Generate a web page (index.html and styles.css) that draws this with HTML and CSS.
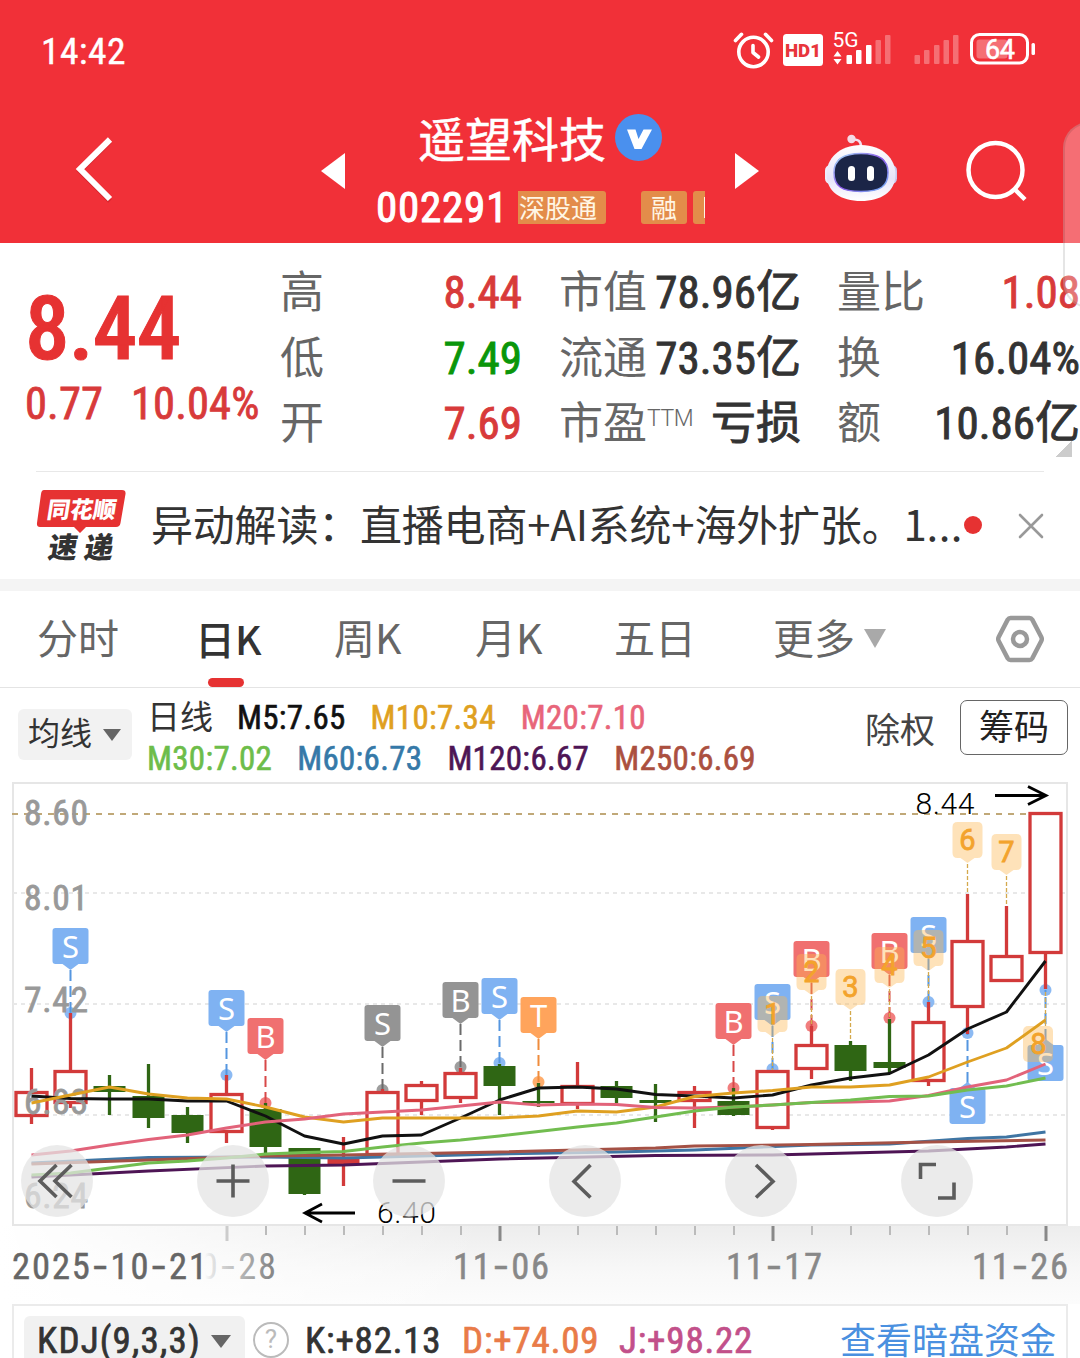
FILE: index.html
```html
<!DOCTYPE html>
<html lang="zh-CN">
<head>
<meta charset="utf-8">
<title>遥望科技 002291</title>
<link rel="stylesheet" href="styles.css">
</head>
<body>
<header class="top">
  <div class="status">
    <span class="clock">14:42</span>
    <svg class="status-icons" width="306" height="44" viewBox="732 28 306 44">
      <g fill="none" stroke="#fff" stroke-width="3.6" stroke-linecap="round" stroke-linejoin="round">
        <circle cx="753.5" cy="52" r="14.7"/>
        <path d="M735.5 40.5l6-6.2M771.5 40.5l-6-6.2M753 45.500v7l5.500 4.500"/>
      </g>
      <rect x="783" y="34" width="40" height="32" rx="3.500" fill="#fff"/>
      <text class="hd" x="785" y="57" textLength="36" lengthAdjust="spacingAndGlyphs">HD1</text>
      <text class="net" x="832.500" y="47" textLength="26">5G</text>
      <g fill="#fff">
        <path d="M833.500 56.500l4-5.500 4 5.500zM833.500 59l4 5.500 4-5.500z"/>
        <rect x="846.500" y="55" width="5.500" height="9" rx="1"/>
        <rect x="856" y="50" width="5.500" height="14" rx="1"/>
        <rect x="866" y="45" width="5.500" height="19" rx="1"/>
      </g>
      <g fill="#fff" opacity=".3">
        <rect x="875.500" y="40" width="5.500" height="24" rx="1"/>
        <rect x="885" y="35" width="5.500" height="29" rx="1"/>
        <rect x="914.500" y="55" width="5.500" height="9" rx="1"/>
        <rect x="924" y="50" width="5.500" height="14" rx="1"/>
        <rect x="934" y="45" width="5.500" height="19" rx="1"/>
        <rect x="943.500" y="40" width="5.500" height="24" rx="1"/>
        <rect x="953" y="35" width="5.500" height="29" rx="1"/>
        <rect x="976.500" y="39.500" width="31" height="19" rx="3"/>
      </g>
      <rect x="971.500" y="34.500" width="56" height="28.500" rx="8" fill="none" stroke="#fff" stroke-width="3"/>
      <rect x="1031.500" y="43" width="3.500" height="12" rx="1.500" fill="#fff"/>
      <text class="pct" x="985" y="58.500" textLength="30">64</text>
    </svg>
  </div>
  <div class="nav">
    <svg class="back" width="40" height="68" viewBox="0 0 40 68"><path d="M35 4.500L5 34l30 30" fill="none" stroke="#a8141c" stroke-opacity=".35" stroke-width="5" transform="translate(0 2)"/><path d="M35 4.500L5 34l30 30" fill="none" stroke="#fff" stroke-width="6"/></svg>
    <svg class="prev" width="24" height="36" viewBox="0 0 24 36"><path d="M0 18L24 0v36z" fill="#fff"/></svg>
    <div class="stock">
      <div class="stock-name">遥望科技
        <svg width="47" height="47" viewBox="0 0 47 47"><circle cx="23.500" cy="23.500" r="23.500" fill="#4a90ee"/><path d="M12 15.500h8.500l3 9.500 5-9.500h8.500L26.500 35h-7z" fill="#fff"/></svg>
      </div>
      <div class="stock-sub"><span class="code">002291</span><span class="tag tag-cut">深股通</span><span class="tag tag-rong">融</span><span class="tag tag-part"></span></div>
    </div>
    <svg class="next" width="24" height="36" viewBox="0 0 24 36"><path d="M24 18L0 0v36z" fill="#fff"/></svg>
    <svg class="robot" width="74" height="70" viewBox="824 133 74 70">
      <defs>
        <linearGradient id="shell" x1="0" y1="0" x2="0" y2="1"><stop offset="0" stop-color="#fff"/><stop offset=".6" stop-color="#e6e3f8"/><stop offset="1" stop-color="#fff"/></linearGradient>
        <linearGradient id="rim" x1="0" y1="0" x2="1" y2="1"><stop offset="0" stop-color="#a5e4f8"/><stop offset=".5" stop-color="#8a55e8"/><stop offset="1" stop-color="#74b8f5"/></linearGradient>
      </defs>
      <path d="M852 139.500q9-1 9 7" fill="none" stroke="#f3dff0" stroke-width="2.500"/>
      <circle cx="851.500" cy="139" r="4.200" fill="#f4dbe6"/>
      <rect x="825" y="165" width="12" height="19" rx="5.500" fill="#efedfb"/>
      <rect x="885" y="165" width="12" height="19" rx="5.500" fill="#c9c9ee"/>
      <path d="M861 145c22 0 34.500 14 34.500 29 0 18-14.500 27-34.500 27s-34.500-9-34.500-27c0-15 12.500-29 34.500-29z" fill="url(#shell)"/>
      <path d="M861 153.500c18 0 27 6 27 19 0 14-8 19-27 19s-27-5-27-19c0-13 9-19 27-19z" fill="#1b2547" stroke="url(#rim)" stroke-width="1.500"/>
      <rect x="848" y="166" width="7" height="15" rx="3.500" fill="#fff"/>
      <rect x="867" y="166" width="7" height="15" rx="3.500" fill="#fff"/>
    </svg>
    <svg class="search" width="62" height="62" viewBox="0 0 62 62"><g fill="none" stroke="#fff" stroke-width="4.500"><circle cx="29.500" cy="30" r="27"/><path d="M48.500 49l10.500 10.500"/></g></svg>
  </div>
</header>
<div class="side-handle"></div>

<section class="quote">
  <div class="price">
    <div class="last">8.44</div>
    <div class="change"><span>0.77</span><span>10.04%</span></div>
  </div>
  <dl class="stats s1">
    <dt>高</dt><dd class="up">8.44</dd>
    <dt>低</dt><dd class="down">7.49</dd>
    <dt>开</dt><dd class="up">7.69</dd>
  </dl>
  <dl class="stats s2">
    <dt>市值</dt><dd>78.96亿</dd>
    <dt>流通</dt><dd>73.35亿</dd>
    <dt>市盈<sup>TTM</sup></dt><dd>亏损</dd>
  </dl>
  <dl class="stats s3">
    <dt>量比</dt><dd class="up">1.08</dd>
    <dt>换</dt><dd>16.04%</dd>
    <dt>额</dt><dd>10.86亿</dd>
  </dl>
  <i class="corner"></i>
</section>

<section class="news">
  <svg class="logo" width="90" height="74" viewBox="36 488 90 74">
    <path d="M44 489h78q4 0 3.500 4l-5 29q-.6 4-4.500 4H86l-6 6-6-6H40q-3.500 0-3-4l4-29q.5-4 3-4z" fill="#e63232"/>
    <text class="logo-a" transform="translate(46 517) skewX(-9)" textLength="69">同花顺</text>
    <text class="logo-b" transform="translate(47 557) skewX(-9)" textLength="65">速递</text>
  </svg>
  <p>异动解读：直播电商+AI系统+海外扩张。1<span>...</span></p>
  <i class="dot"></i>
  <svg class="close" width="26" height="26" viewBox="0 0 26 26"><path d="M2 2l22 22M24 2L2 24" stroke="#999" stroke-width="2.600" stroke-linecap="round"/></svg>
</section>

<nav class="tabs">
  <span>分时</span>
  <span class="active">日K</span>
  <span>周K</span>
  <span>月K</span>
  <span>五日</span>
  <span>更多<svg width="22" height="19" viewBox="0 0 22 19"><path d="M0 0h22L11 19z" fill="#a9a9a9"/></svg></span>
  <svg class="gear" width="50" height="48" viewBox="0 0 50 48"><g fill="none" stroke="#999"><path d="M15.500 3h19q1.800 0 2.800 1.600l9 17.400q1 2 0 4l-9 17.400q-1 1.600-2.800 1.600h-19q-1.800 0-2.800-1.600L3.700 26q-1-2 0-4l9-17.400Q13.700 3 15.500 3z" stroke-width="4.500"/><circle cx="25" cy="24" r="7" stroke-width="4.500"/></g></svg>
</nav>

<section class="legend">
  <span class="pick">均线<svg width="18" height="12" viewBox="0 0 18 12"><path d="M0 0h18L9 12z" fill="#666"/></svg></span>
  <div class="ma">
    <div><b class="ri">日线</b><b class="m5">M5:7.65</b><b class="m10">M10:7.34</b><b class="m20">M20:7.10</b></div>
    <div><b class="m30">M30:7.02</b><b class="m60">M60:6.73</b><b class="m120">M120:6.67</b><b class="m250">M250:6.69</b></div>
  </div>
  <span class="chuquan">除权</span>
  <span class="chips">筹码</span>
</section>

<section class="chart">
  <svg id="kline" width="1080" height="444" viewBox="0 782 1080 444">
    <rect x="13" y="783" width="1054" height="442" fill="#fff" stroke="#e6e6e6" stroke-width="2"/>
    <g class="grid">
      <path class="limit" d="M12 814H1030"/>
      <path d="M13 893H1066M13 1004H1066M13 1115H1066"/>
    </g>
    <g id="marks"></g>
    <g id="candles"></g>
    <g id="counts"></g>
    <g class="ylabels">
      <text x="24" y="825" textLength="64">8.60</text>
      <text x="24" y="910" textLength="64">8.01</text>
      <text x="24" y="1012" textLength="64">7.42</text>
      <text x="24" y="1114" textLength="64">6.83</text>
      <text x="24" y="1208" textLength="64">6.24</text>
    </g>
    <g id="lines"></g>
    <g class="extreme">
      <text x="915.500" y="814" textLength="59">8.44</text>
      <path d="M995 795.500h50M1028 786.500l18 9-18 9"/>
      <text x="377" y="1223" textLength="59">6.40</text>
      <path d="M355 1213h-50M322 1204l-17 9 17 9"/>
    </g>
  </svg>
  <div class="tools">
    <button><svg viewBox="0 0 72 72"><path d="M35.500 20L19 36l16.500 16M50.500 20L34 36l16.500 16"/></svg></button>
    <button><svg viewBox="0 0 72 72"><path d="M36 19.500v33M19.500 36h33"/></svg></button>
    <button><svg viewBox="0 0 72 72"><path d="M19.500 36h33"/></svg></button>
    <button><svg viewBox="0 0 72 72"><path d="M41.500 20L25 36.500 41.500 52.500"/></svg></button>
    <button><svg viewBox="0 0 72 72"><path d="M31 20l17 16.500L31 52.500"/></svg></button>
    <button><svg viewBox="0 0 72 72"><path d="M19.500 34V19.500H35M37 53h16V37.500"/></svg></button>
  </div>
</section>

<section class="axis">
  <svg id="axis" width="1080" height="78" viewBox="0 1226 1080 78">
    <defs>
      <linearGradient id="fade" gradientUnits="userSpaceOnUse" x1="205" y1="0" x2="270" y2="0"><stop offset="0" stop-color="#888" stop-opacity="0"/><stop offset=".1" stop-color="#888" stop-opacity=".2"/><stop offset="1" stop-color="#888"/></linearGradient>
    </defs>
    <g id="ticks"></g>
    <text class="old" x="180" y="1279" textLength="96">10<tspan>-</tspan>28</text>
    <text x="453" y="1279" textLength="96">11<tspan>-</tspan>06</text>
    <text x="726" y="1279" textLength="96">11<tspan>-</tspan>17</text>
    <text x="972" y="1279" textLength="96">11<tspan>-</tspan>26</text>
    <text class="first" x="12" y="1279" textLength="195">2025<tspan>-</tspan>10<tspan>-</tspan>21</text>
  </svg>
</section>

<section class="kdj">
  <span class="kdj-name">KDJ(9,3,3)<svg width="20" height="13" viewBox="0 0 20 13"><path d="M0 0h20L10 13z" fill="#666"/></svg></span>
  <span class="help">?</span>
  <b class="k">K:+82.13</b><b class="d">D:+74.09</b><b class="j">J:+98.22</b>
  <a>查看暗盘资金</a>
</section>

<script>
// x of the nth day, 39px per candle
function px(i) { return 31.5 + i * 39; }

// up/down, body top, body bottom, high, low
var candles = [
  ['u',1091,1117,1068,1124],['u',1070,1104,1013,1108],['d',1086,1092,1075,1115],
  ['d',1096,1118,1064,1128],['d',1115,1133,1107,1143],['u',1093,1133,1075,1143],
  ['d',1109,1147,1103,1153],['d',1148,1194,1148,1195],['u',1159,1164,1137,1186],
  ['u',1091,1156,1089,1156],['u',1084,1102,1081,1115],['u',1072,1099,1068,1103],
  ['d',1066,1086,1064,1115],['d',1101,1103,1083,1107],['u',1085,1105,1062,1109],
  ['d',1086,1098,1081,1103],['d',1100,1103,1084,1122],['u',1091,1102,1086,1128],
  ['d',1101,1115,1088,1116],['u',1070,1129,1070,1130],['u',1044,1070,1026,1079],
  ['d',1045,1071,1041,1081],['d',1062,1068,1019,1073],['u',1021,1082,1002,1086],
  ['u',940,1008,894,1034],['u',955,982,906,982],['u',812,954,812,989]
];

// day, letter, colour, top of the box, dot
var marks = [
  [1,'S','blue',928,1013],[5,'S','blue',990,1075],[6,'B','red',1018,1103],
  [9,'S','grey',1005,1090],[11,'B','grey',982,1067],[12,'S','blue',978,1063],
  [13,'T','orange',997,1082],[18,'B','red',1003,1088],[19,'S','blue',984,1069],
  [20,'B','red',941,1026],[22,'B','red',933,1018],[23,'S','blue',917,1002],
  [24,'S','blue',1088,1033],[26,'S','blue',1045,990]
];

// day, top of the box, end of the stem
var counts = [[19,996,1070],[20,954,1026],[21,969,1041],[22,947,1019],[23,930,1002],[24,822,894],[25,834,906]];

var lines = {
  m60: [[0,1163],[3,1157.5],[6,1157],[8,1158],[12,1154],[15,1152],[17,1150],[20,1145],[22,1144],[24,1138.5],[25,1137],[26,1132]],
  m120: [[0,1177],[3,1171],[6,1166],[8,1165],[12,1159],[16,1155.5],[19,1155],[21,1153],[23,1151],[25,1147],[26,1144]],
  m250: [[0,1164],[3,1160],[6,1156],[8,1155],[12,1152],[16,1148],[17,1146],[20,1144.5],[23,1142],[26,1140]],
  m5: [1096,1098.5,1099,1099,1101,1101,1116,1136,1144,1136,1135,1118,1100,1088,1087,1089,1094.5,1096,1098,1095,1085,1078,1073.5,1055,1029,1012,961],
  m10: [1103,1095,1087,1094,1098,1099,1107,1117,1122,1118,1118,1118,1118,1116,1111,1112,1107,1096.5,1093,1090.5,1087,1087,1085,1077,1062,1048,1020],
  m20: [1155,1151,1145,1139.5,1135,1128,1122,1119,1114,1112,1110,1106,1102,1105,1104,1104.5,1107.5,1108,1107,1105,1102.5,1102,1101,1095.5,1087,1080,1064],
  m30: [1175,1173,1168,1163,1161,1158,1154,1152.5,1151.5,1147,1143,1140,1136,1131.5,1127,1123,1117,1111,1107,1105,1102.5,1100,1096.5,1096,1090,1086,1078]
};

var html = '';
candles.forEach(function (c, i) {
  var x = px(i);
  html += '<path class="wick ' + c[0] + '" d="M' + x + ' ' + c[3] + 'V' + c[4] + '"/>';
  if (c[0] == 'u' && c[2] - c[1] > 6) {
    html += '<rect class="body u" x="' + (x - 15.5) + '" y="' + (c[1] + 1.5) + '" width="31" height="' + (c[2] - c[1] - 3) + '"/>';
  } else {
    html += '<rect class="solid ' + c[0] + '" x="' + (x - 16) + '" y="' + c[1] + '" width="32" height="' + (c[2] - c[1]) + '"/>';
  }
});
document.getElementById('candles').innerHTML = html;

html = '';
marks.forEach(function (m) {
  var x = px(m[0]), y = m[3], below = m[4] < y;
  html += '<g class="mark ' + m[2] + '"><circle cx="' + x + '" cy="' + m[4] + '" r="6"/>';
  html += '<path class="stem" d="M' + x + ' ' + (below ? y - 5 : y + 42) + 'V' + m[4] + '"/>';
  html += '<rect x="' + (x - 18) + '" y="' + y + '" width="36" height="36" rx="3"/>';
  html += below ? '<path d="M' + (x - 8) + ' ' + y + 'l8-6 8 6z"/>' : '<path d="M' + (x - 8) + ' ' + (y + 36) + 'l8 6 8-6z"/>';
  html += '<text x="' + x + '" y="' + (y + 30) + '">' + m[1] + '</text></g>';
});
document.getElementById('marks').innerHTML = html;

html = '';
counts.forEach(function (c, n) {
  var x = px(c[0]), y = c[1];
  html += '<path class="count-stem" d="M' + x + ' ' + (y + 42) + 'V' + c[2] + '"/>';
  html += '<path class="count" d="M' + (x - 10) + ' ' + y + 'h20q5 0 5 5v26q0 5-5 5h-3l-7 5-7-5h-3q-5 0-5-5v-26q0-5 5-5z"/>';
  html += '<text x="' + x + '" y="' + (y + 28) + '">' + (n + 1) + '</text>';
});
html += '<path class="count-stem" d="M1045.5 992V1026"/><rect class="count" x="1023" y="1026" width="30" height="36" rx="5"/><text x="1038.5" y="1054">8</text>';
document.getElementById('counts').innerHTML = html;

html = '';
Object.keys(lines).forEach(function (k) {
  var pts = lines[k].map(function (p, i) {
    return p.length ? px(p[0]) + ',' + p[1] : px(i) + ',' + p;
  });
  html += '<polyline class="' + k + '" points="' + pts.join(' ') + '"/>';
});
document.getElementById('lines').innerHTML = html;

html = '';
for (var i = 5; i < 27; i++) {
  var big = (i - 5) % 7 == 0;
  html += '<path class="' + (i == 5 ? 'big old' : big ? 'big' : '') + '" d="M' + (px(i) + .5) + ' 1226v' + (big ? 15 : 9) + '"/>';
}
document.getElementById('ticks').innerHTML = html;
</script>
</body>
</html>
```
FILE: styles.css
```css
* { box-sizing: border-box; }
body { margin: 0; width: 1080px; height: 1358px; overflow: hidden; position: relative; background: #fff; color: #333; font-family: "Roboto Condensed", "Noto Sans CJK SC", sans-serif; }
svg { display: block; overflow: visible; }
b, i { font-style: normal; font-weight: 400; }

.top { height: 243px; background: #f13038; color: #fff; }
.status { display: flex; justify-content: space-between; align-items: center; height: 100px; padding: 0 42px 0 41px; }
.clock { padding-top: 1px; font-size: 37.500px; letter-spacing: .4px; -webkit-text-stroke: .4px; }
.hd { font: 900 19px Roboto, sans-serif; fill: #e8353c; }
.net { font: 400 21px Roboto, sans-serif; fill: #fff; }
.pct { font: 400 27px Roboto, sans-serif; fill: #fff; stroke: #fff; stroke-width: .6; }
.nav { display: grid; grid-template-columns: 75px 246px 55px 359px 89px 142px 1fr; height: 143px; }
.nav > svg { margin-top: 53px; }
.nav .back { margin-top: 35px; grid-column: 2; }
.nav .robot { margin-top: 33px; }
.nav .search { margin-top: 40px; }
.nav .prev { grid-column: 2; grid-row: 1; justify-self: end; }
.nav .back { grid-row: 1; }
.nav .prev { margin-right: -24px; }
.stock { grid-column: 4; }
.stock-name { display: flex; align-items: center; gap: 9px; height: 74px; padding-left: 42px; font: 400 47px/78px "Noto Sans CJK SC", sans-serif; -webkit-text-stroke: .5px; }
.stock-sub { display: flex; align-items: center; height: 68px; padding-bottom: 2px; }
.code { width: 142px; font-size: 43px; letter-spacing: .8px; -webkit-text-stroke: 1px; }
.tag { height: 33px; border-radius: 3px; background: #e38c4a; font-size: 26px; line-height: 36px; text-align: center; color: #fff6e4; }
.tag-cut { width: 88px; padding-right: 9px; border-radius: 0 3px 3px 0; display: flex; justify-content: flex-end; }
.tag-rong { width: 46px; margin: 0 6px 0 35px; }
.tag-part { width: 12px; padding: 6px 0; border-radius: 3px 0 0 3px; }
.tag-part:after { content: ""; display: block; width: 1px; height: 21px; margin-left: 11px; background: #fff6e4; }
.side-handle { position: absolute; left: 1063px; top: 122px; width: 60px; height: 186px; border: 2px solid rgba(0,0,0,.1); border-radius: 26px; background: rgba(255,255,255,.3); z-index: 2; }

.quote { display: grid; grid-template-columns: 255px 243px 278px 1fr; height: 228px; padding: 17px 0 0 25px; position: relative; }
.last { height: 107px; color: #e63232; font-size: 89px; font-weight: 500; line-height: 138px; letter-spacing: -.700px; -webkit-text-stroke: 1px; }
.change { display: flex; gap: 28px; color: #d83a3a; font-size: 44.5px; line-height: 74px; letter-spacing: .1px; -webkit-text-stroke: .8px; }
.stats { display: grid; grid-template-columns: auto 1fr; grid-auto-rows: 65.500px; margin: 0; line-height: 66px; white-space: nowrap; }
.stats dt { font-size: 44px; color: #666; }
.stats dd { margin: 0; font-size: 45px; text-align: right; color: #333; -webkit-text-stroke: .9px; }
.s1 { padding-right: 1px; }
.s2 { grid-template-columns: 88px 1fr; padding-left: 36px; }
.s3 { padding-left: 36px; }
.stats .up { color: #d83a3a; }
.stats .down { color: #0a960a; }
.stats sup { font: 300 23px/1 Roboto, sans-serif; letter-spacing: -.5px; vertical-align: 13px; }
.corner { position: absolute; left: 1055px; top: 197px; width: 17px; height: 17px; background: linear-gradient(135deg, transparent 50%, #ccc 50%); }

.news { display: flex; align-items: center; height: 108px; margin: 0 36px; border-top: 1px solid #e8e8e8; }
.news p { width: 815px; margin: -6px 0 0 25px; font: 400 42px/60px "Noto Sans CJK SC", sans-serif; letter-spacing: -.2px; white-space: nowrap; }
.news p span { letter-spacing: .4px; }
.dot { width: 18px; height: 18px; margin-top: -1px; border-radius: 50%; background: #e63232; }
.close { margin-left: 36px; }
.logo-a { font: 900 23px "Noto Sans CJK SC", sans-serif; fill: #fff; }
.logo-b { font: 900 29px "Noto Sans CJK SC", sans-serif; fill: #333; }

.tabs { display: grid; grid-template-columns: 160px 137px 141px 139px 159px 222px 1fr; height: 109px; padding-left: 37px; border-top: 12px solid #f4f4f4; border-bottom: 1px solid #e4e4e4; font: 400 41px/90px "Noto Sans CJK SC", sans-serif; color: #666; }
.tabs span { display: flex; }
.tabs span svg { margin: 38px 0 0 9px; }
.tabs .active { position: relative; font-weight: 500; font-size: 40px; line-height: 94px; color: #333; margin-left: -2px; }
.active:after { content: ""; position: absolute; left: 13px; bottom: 0; width: 36px; height: 9px; border-radius: 5px; background: #e63232; }
.gear { margin-top: 24px; }

.legend { display: flex; height: 94px; padding: 0 12px 0 18px; }
.pick { display: flex; align-items: center; gap: 12px; width: 114px; height: 51px; margin-top: 21px; padding-left: 10px; border-radius: 6px; background: #f2f2f2; font-size: 32px; line-height: 51px; }
.pick svg { margin-left: -1px; }
.ma { width: 718px; padding: 9px 0 0 15px; font-size: 33px; line-height: 41px; white-space: nowrap; }
.ma div { display: flex; gap: 25px; letter-spacing: .3px; }
.ma b { -webkit-text-stroke: .6px; }
.ma .ri { width: 65px; letter-spacing: 0; -webkit-text-stroke: 0; }
.m5 { color: #111; } .m10 { color: #dfa021; } .m20 { color: #e8657a; } .m30 { color: #6dbd4a; }
.m60 { color: #3579a8; } .m120 { color: #4e1555; } .m250 { color: #ab5040; }
.chuquan { width: 95px; margin-left: 15px; font-size: 35px; line-height: 88px; color: #444; }
.chips { width: 108px; height: 55px; margin-top: 12px; flex: none; border: 1.500px solid #666; border-radius: 7px; font-size: 35px; line-height: 55px; text-align: center; color: #222; }

.chart { position: relative; height: 444px; }
.grid path { stroke: #e8e8e8; stroke-width: 1.800; stroke-dasharray: 4 4; }
.grid .limit { stroke: #c0a878; stroke-width: 2; stroke-dasharray: 6 6; }
.wick { stroke-width: 3.300; }
.wick.u, .body { stroke: #d23a3a; }
.wick.d { stroke: #2f6614; }
.body { fill: #fff; stroke-width: 3.300; }
.solid.u { fill: #d23a3a; }
.solid.d { fill: #2f6614; }
.ylabels { font-size: 35.500px; fill: #999; stroke: #999; stroke-width: .8; }
#lines polyline { fill: none; stroke-width: 2.900; stroke-linejoin: round; }
#lines .m5 { stroke: #111; } #lines .m10 { stroke: #dfa021; } #lines .m20 { stroke: #e2637a; } #lines .m30 { stroke: #72bd50; }
#lines .m60 { stroke: #3f75a3; } #lines .m120 { stroke: #4e1555; } #lines .m250 { stroke: #a45145; }
.blue { fill: #7fb2f2; stroke: #5596e0; }
.red { fill: #f07070; stroke: #d84848; }
.grey { fill: #949494; stroke: #6b6b6b; }
.orange { fill: #ffa45c; stroke: #ef8c3c; }
.mark rect, .mark circle, .mark path { stroke: none; }
.mark circle { opacity: .9; }
.mark .stem { stroke: inherit; stroke-width: 2; stroke-dasharray: 11 5; }
.mark text { font: 400 31px "Noto Sans", sans-serif; text-anchor: middle; fill: #fff; stroke: none; }
.count { fill: rgba(252,182,80,.4); }
.count-stem { stroke: #d4a94c; stroke-width: 1.300; stroke-dasharray: 4 2; }
#counts text { font: 400 29px Roboto, sans-serif; text-anchor: middle; fill: #f3a32c; stroke: #f3a32c; stroke-width: .8; }
.extreme { fill: #000; }
.extreme text { font: 300 30px Roboto, sans-serif; }
.extreme path { fill: none; stroke: #000; stroke-width: 2.800; }
.tools { position: absolute; left: 21px; top: 363px; display: flex; gap: 104px; }
.tools button { width: 72px; height: 72px; padding: 0; border: 0; border-radius: 50%; background: rgba(228,228,228,.74); }
.tools path { fill: none; stroke: #5c5c5c; stroke-width: 3.600; }

.axis { height: 78px; background: linear-gradient(90deg, #fff, rgba(255,255,255,0) 45%), linear-gradient(#ededed, #f8f8f8 60%, #fcfcfc); }
#axis text { font-size: 36.500px; fill: #888; stroke: #888; stroke-width: .5; }
#axis tspan { font-family: Inter, sans-serif; }
#axis .first { fill: #666; stroke: #666; }
#axis .old { fill: url(#fade); stroke: none; }
#ticks path { stroke: #bbb; stroke-width: 2; }
#ticks .big { stroke: #888; stroke-width: 3; }
#ticks .old { stroke: #ccc; }

.kdj { display: flex; height: 80px; margin: 0 12px; padding: 10px 0 0 10px; border: 2px solid #ebebeb; font-size: 37px; line-height: 50px; white-space: nowrap; }
.kdj-name { display: flex; align-items: center; justify-content: space-between; width: 221px; height: 60px; padding: 0 14px 10px 13px; border-radius: 6px; background: #f1f1f1; letter-spacing: 1.200px; -webkit-text-stroke: .7px; }
.help { width: 36px; height: 36px; margin: 6px 16px 0 8px; border: 2.500px solid #bbb; border-radius: 50%; font: 400 26px/31px Roboto, sans-serif; text-align: center; color: #bbb; }
.kdj b { width: 157px; letter-spacing: .8px; -webkit-text-stroke: .7px; }
.k { color: #333; } .d { color: #e97b48; } .j { color: #c2508a; }
.kdj a { margin-left: 64px; font: 400 36px/44px "Noto Sans CJK SC", sans-serif; color: #4a90e0; }
```
